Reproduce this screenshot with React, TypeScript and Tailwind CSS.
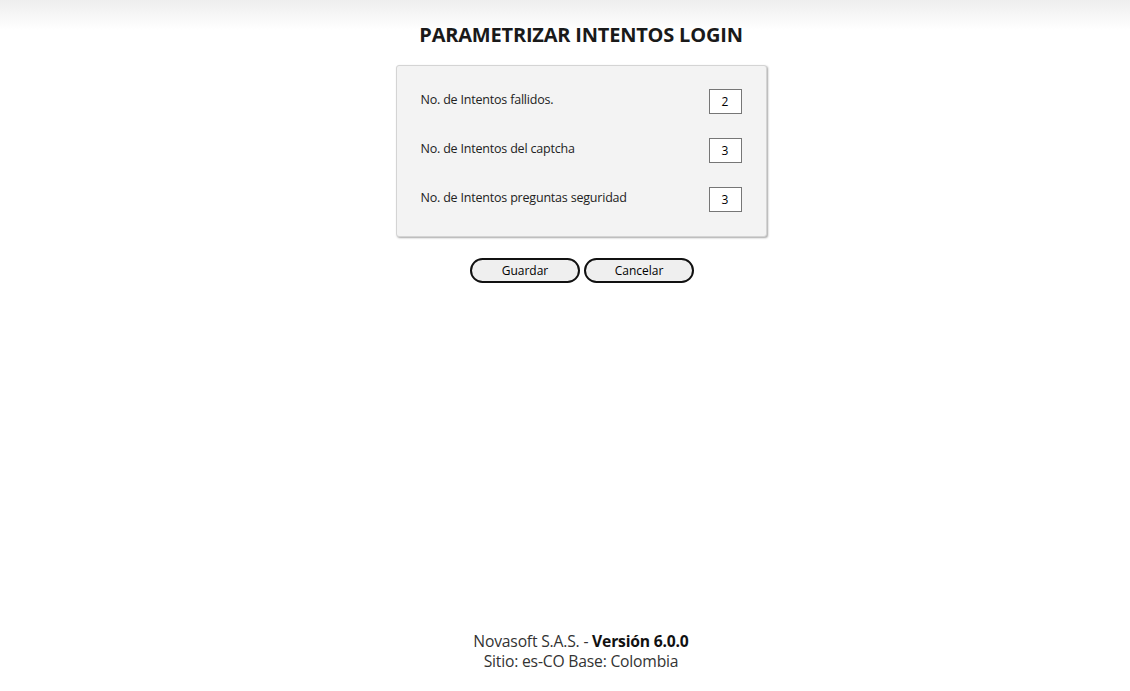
import React from "react";

const rows = [
  { label: "No. de Intentos fallidos.", value: "2" },
  { label: "No. de Intentos del captcha", value: "3" },
  { label: "No. de Intentos preguntas seguridad", value: "3" },
];

export default function App() {
  return (
    <div
      className="min-h-screen flex flex-col bg-white text-[#222]"
      style={{ fontFamily: '"Open Sans", "Noto Sans", sans-serif' }}
    >
      <div className="bg-gradient-to-b from-[#eeeeee] to-white h-[30px] shrink-0" />
      <div className="flex flex-col items-center pl-[32px]">
        <h1 className="text-[20px] font-bold leading-[24px] text-[#1a1a1a] -mt-[7px] tracking-[-0.2px]">
          PARAMETRIZAR INTENTOS LOGIN
        </h1>
        <div className="mt-[18px] w-[371px] bg-[#f3f3f3] border border-[#d4d4d4] rounded-[3px] shadow-[1px_1px_2px_rgba(0,0,0,0.35)] pl-[24px] pr-[24px] pt-[23px] pb-[25px] flex flex-col gap-[25px]">
          {rows.map((r) => (
            <div key={r.label} className="flex items-center justify-between h-[24px]">
              <span className="text-[12.5px] text-[#222] -mt-[2px] tracking-[-0.2px]">{r.label}</span>
              <input
                readOnly
                value={r.value}
                className="w-[33px] h-[25px] border border-[#767676] bg-white text-center text-[12px] text-black outline-none"
                style={{ fontFamily: '"Open Sans", "Noto Sans", sans-serif' }}
              />
            </div>
          ))}
        </div>
        <div className="mt-[21px] flex gap-[4px] pl-[2px]">
          <button className="w-[110px] h-[25px] rounded-full border-2 border-[#111] bg-[#efefef] text-[12px] text-black leading-none">
            Guardar
          </button>
          <button className="w-[110px] h-[25px] rounded-full border-2 border-[#111] bg-[#efefef] text-[12px] text-black leading-none">
            Cancelar
          </button>
        </div>
      </div>
      <div className="mt-auto pb-[20px] pl-[32px] flex flex-col items-center text-[15.7px] leading-[20px] text-[#333] tracking-[-0.2px]">
        <div>
          Novasoft S.A.S. - <span className="font-bold text-[#111]">Versión 6.0.0</span>
        </div>
        <div>Sitio: es-CO Base: Colombia</div>
      </div>
    </div>
  );
}
